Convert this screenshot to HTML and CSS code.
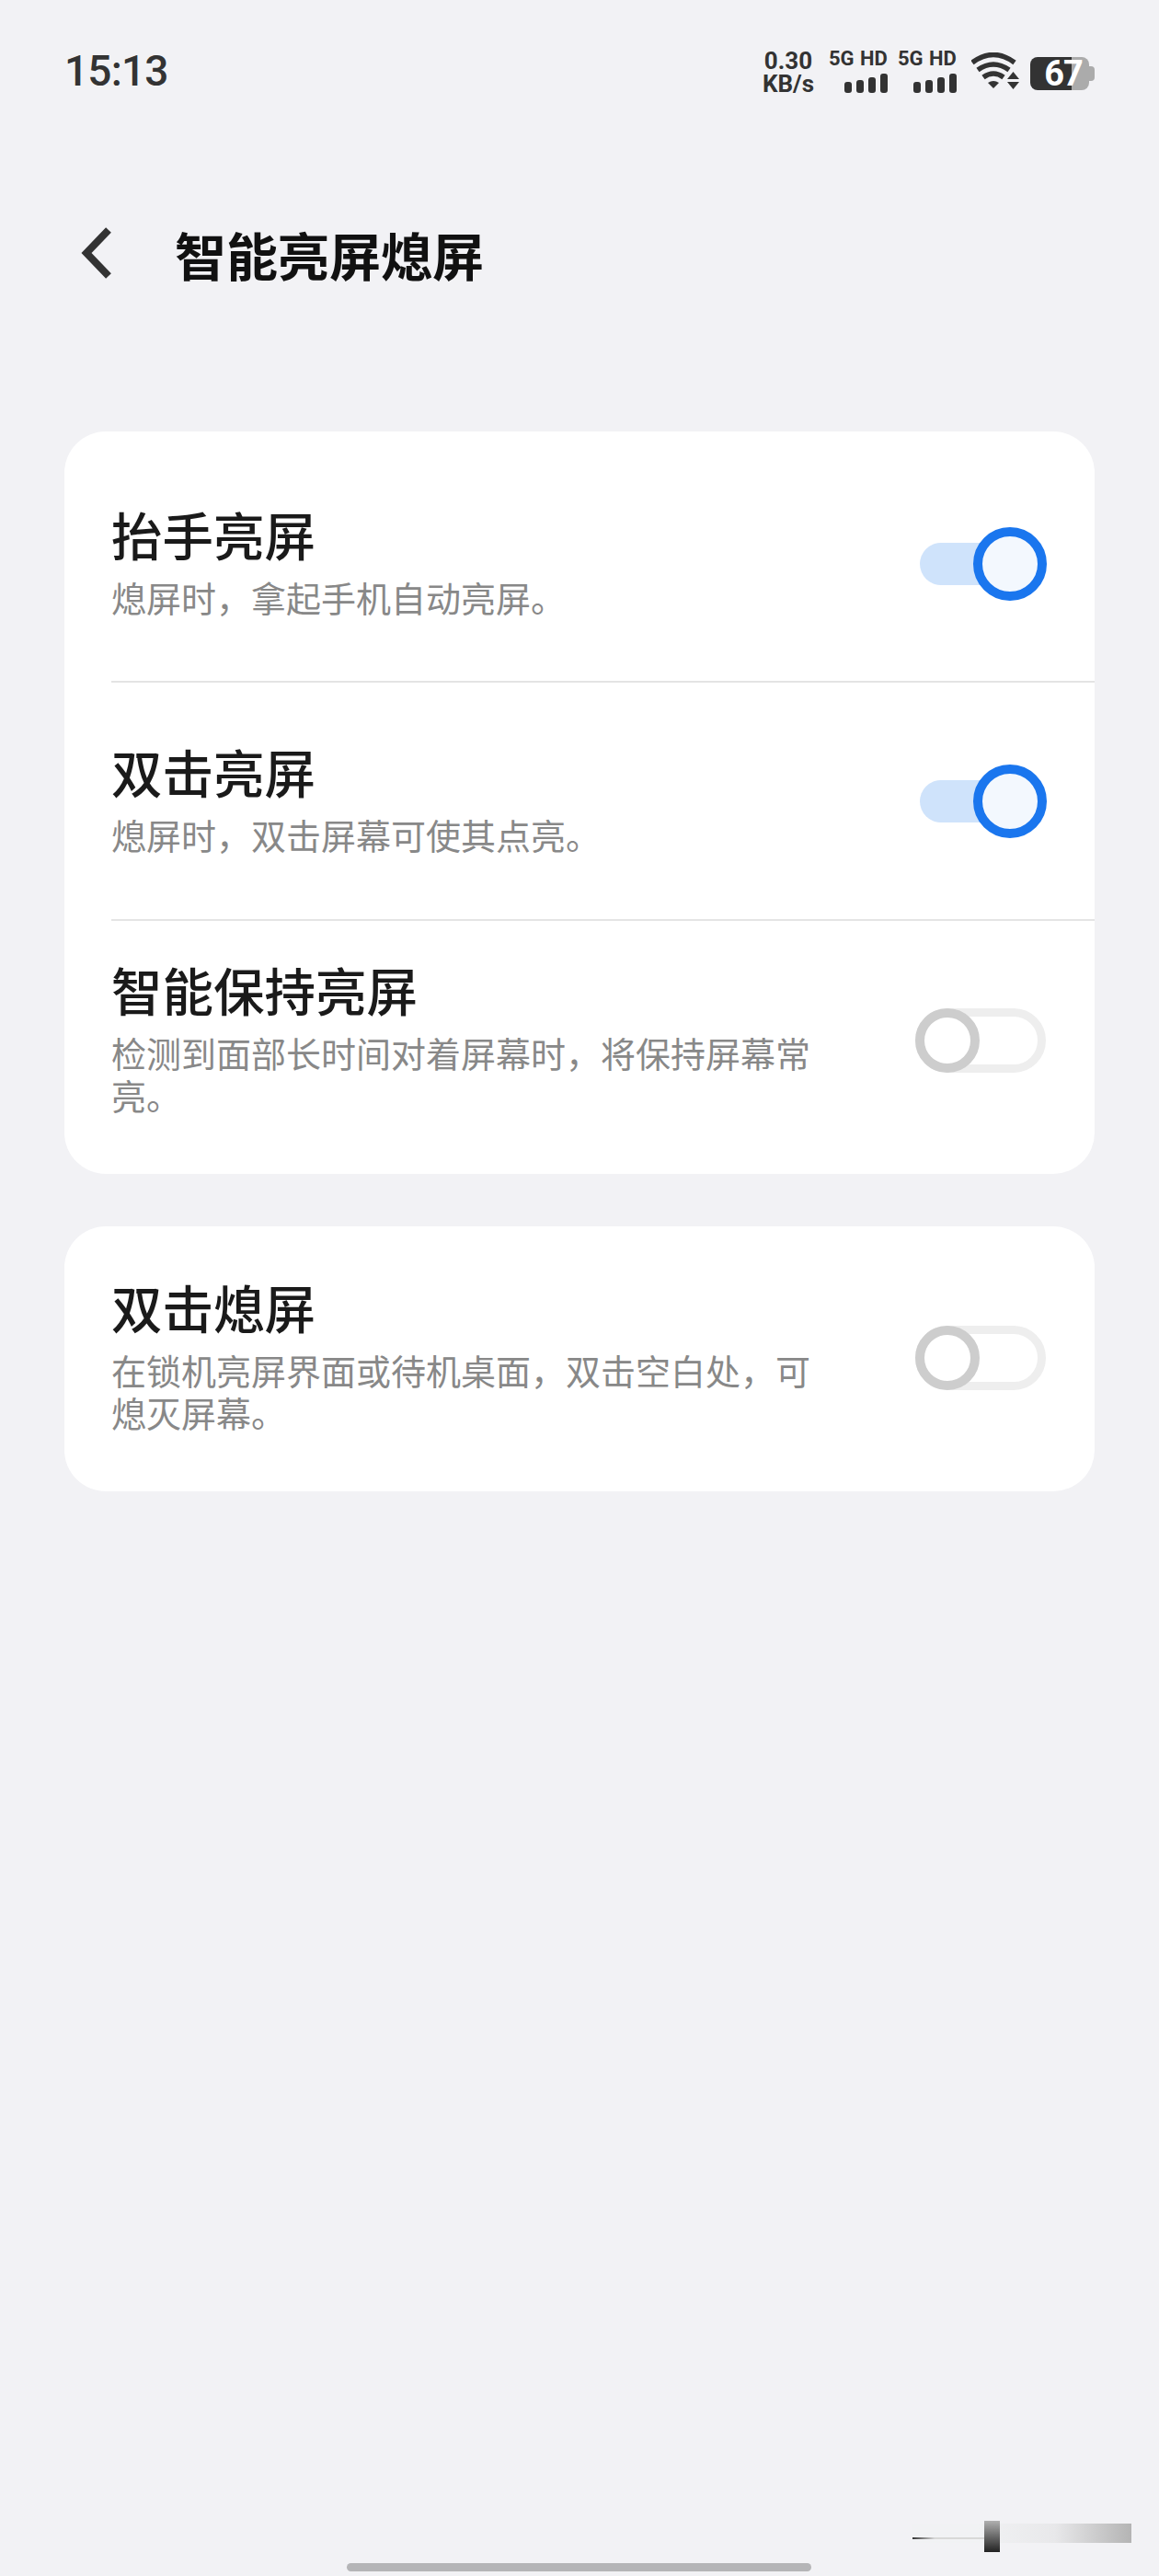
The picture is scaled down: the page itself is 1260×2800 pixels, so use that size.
FILE: index.html
```html
<!DOCTYPE html>
<html lang="zh-CN">
<head>
  <meta charset="UTF-8">
  <title>智能亮屏熄屏</title>
  <meta name="viewport" content="width=device-width, initial-scale=1">
  <link rel="stylesheet" href="styles.css">
</head>
<body>
  <div class="page">
    <div class="status-bar">
      <div class="time">15:13</div>
      <div class="status-icons">
        <div class="speed">0.30<br>KB/s</div>
        <div class="net">
          <div class="net-label">5G HD</div>
          <div class="bars"><i class="b1"></i><i class="b2"></i><i class="b3"></i><i class="b4"></i></div>
        </div>
        <div class="net">
          <div class="net-label">5G HD</div>
          <div class="bars"><i class="b1"></i><i class="b2"></i><i class="b3"></i><i class="b4"></i></div>
        </div>
        <svg class="wifi" width="52" height="40" viewBox="0 0 52 40">
          <g fill="none" stroke="#333" stroke-width="5.5">
            <path d="M1 11Q24 -6 47 11"/>
            <path d="M7 19Q24 7 41 19"/>
            <path d="M13 27Q24 19 35 27"/>
          </g>
          <path d="M18 33Q24 29 30 33L24 39Z" fill="#333"/>
          <path d="M39 29L45.500 21L52 29ZM39 32H52L45.500 40Z" fill="#333"/>
        </svg>
        <div class="battery"><span>67</span></div>
      </div>
    </div>

    <div class="header">
      <svg class="back" width="34" height="56" viewBox="0 0 34 56">
        <path d="M30 3L6 28L30 53" fill="none" stroke="#333" stroke-width="8"/>
      </svg>
      <h1>智能亮屏熄屏</h1>
    </div>

    <div class="card">
      <div class="row row-first">
        <div class="row-text">
          <div class="row-title">抬手亮屏</div>
          <div class="row-desc">熄屏时，拿起手机自动亮屏。</div>
        </div>
        <div class="toggle on"><span class="track"></span><span class="knob"></span></div>
      </div>
      <div class="row row-second">
        <div class="row-text">
          <div class="row-title">双击亮屏</div>
          <div class="row-desc">熄屏时，双击屏幕可使其点亮。</div>
        </div>
        <div class="toggle on"><span class="track"></span><span class="knob"></span></div>
      </div>
      <div class="row row-last">
        <div class="row-text">
          <div class="row-title">智能保持亮屏</div>
          <div class="row-desc">检测到面部长时间对着屏幕时，将保持屏幕常亮。</div>
        </div>
        <div class="toggle"><span class="track"></span><span class="knob"></span></div>
      </div>
    </div>

    <div class="card card-second">
      <div class="row row-single">
        <div class="row-text">
          <div class="row-title">双击熄屏</div>
          <div class="row-desc">在锁机亮屏界面或待机桌面，双击空白处，可熄灭屏幕。</div>
        </div>
        <div class="toggle"><span class="track"></span><span class="knob"></span></div>
      </div>
    </div>

    <div class="home-bar"></div>
    <div class="mark"><span class="mark-line"></span><span class="mark-block"></span></div>
  </div>
</body>
</html>
```

FILE: styles.css
```css
body { margin: 0; background: #f2f2f5; font-family: "Noto Sans CJK SC", "Noto Sans", sans-serif; }
.page { position: relative; height: 2800px; padding: 0 70px; box-sizing: border-box; display: flex; flex-direction: column; overflow: hidden; }

/* status bar */
.status-bar { height: 154px; display: flex; justify-content: space-between; align-items: center; flex-shrink: 0; }
.time { font-family: Roboto, sans-serif; font-weight: 500; font-size: 46px; color: #333; letter-spacing: -0.8px; }
.status-icons { display: flex; align-items: center; margin-right: -1px; }
.speed { width: 58px; margin: 3px 15px 0 0; font-family: Roboto, sans-serif; font-weight: 700; font-size: 26px; line-height: 25px; color: #333; text-align: center; }
.net { width: 64px; margin-right: 11px; }
.net-label { font-family: Roboto, sans-serif; font-weight: 700; font-size: 22px; line-height: 22px; color: #333; white-space: nowrap; word-spacing: 1px; }
.bars { display: flex; justify-content: flex-end; align-items: flex-end; gap: 5px; height: 22px; margin-top: 4px; }
.bars i { width: 8px; background: #333; border-radius: 3px; }
.bars .b1 { height: 12px; }
.bars .b2 { height: 14px; }
.bars .b3 { height: 17px; }
.bars .b4 { height: 21px; }
.wifi { margin: 0 12px 0 5px; }
.battery { position: relative; width: 64px; height: 36px; margin: 5px 7px 0 0; border-radius: 8px; background: linear-gradient(90deg, #333 70%, #ababab 70%); text-align: center; }
.battery::after { content: ""; position: absolute; left: 64px; top: 10px; width: 6px; height: 16px; border-radius: 0 4px 4px 0; background: #ababab; }
.battery span { font-family: Roboto, sans-serif; font-weight: 700; font-size: 38px; line-height: 36px; color: #fff; display: block; padding-left: 8px; letter-spacing: -1px; }

/* header */
.header { height: 92px; margin-top: 75px; display: flex; align-items: center; flex-shrink: 0; }
.back { margin: 0 0 0 18px; }
h1 { margin: 0 0 0 68px; font-size: 56px; font-weight: 700; color: #111; }

/* settings cards */
.card { margin-top: 148px; background: #fff; border-radius: 45px; flex-shrink: 0; }
.card-second { margin-top: 57px; }
.row { display: flex; justify-content: space-between; align-items: center; margin-left: 51px; padding-right: 52px; }
.row-first { padding-top: 83px; padding-bottom: 66px; border-bottom: 2px solid #e4e4e4; }
.row-second { padding-top: 68px; padding-bottom: 67px; border-bottom: 2px solid #e4e4e4; }
.row-last { padding-top: 46px; padding-bottom: 61px; }
.row-single { padding-top: 59px; padding-bottom: 61px; }
.row-text { width: 770px; margin: -3px 0 3px; }
.row-title { font-size: 55.500px; line-height: 62px; font-weight: 500; color: #1a1a1a; }
.row-desc { margin-top: 15px; margin-bottom: -1px; font-size: 38px; line-height: 46px; color: #888; }

/* toggles */
.toggle { position: relative; width: 143px; height: 80px; flex-shrink: 0; }
.track, .knob { position: absolute; box-sizing: border-box; border-radius: 50px; }
.track { left: 0; top: 5px; width: 142px; height: 70px; border: 9px solid #eee; background: #fff; }
.knob { left: 0; top: 5px; width: 70px; height: 70px; border: 10px solid #cdcdcd; background: #fff; }
.toggle.on .track { left: 5px; top: 17px; width: 110px; height: 46px; border: 0; background: #cfe3fb; }
.toggle.on .knob { left: 63px; top: 0; width: 80px; height: 80px; border-color: #1a76ee; background: #f3f8fe; }

/* bottom */
.home-bar { width: 505px; height: 9px; margin: auto 0 5px 307px; border-radius: 5px; background: #b5b5b7; flex-shrink: 0; }
.mark { position: absolute; left: 992px; top: 2743px; width: 238px; height: 21px; background: linear-gradient(90deg, #f1f2f4 30%, #e8e8ea 65%, #b4b4b4 100%); }
.mark-line { position: absolute; left: 0; top: 15px; width: 80px; height: 2px; background: linear-gradient(90deg, #333, #d8d8d8 30%); }
.mark-block { position: absolute; left: 78px; top: -3px; width: 17px; height: 34px; background: linear-gradient(180deg, #b0b0b0, #222); }
```
